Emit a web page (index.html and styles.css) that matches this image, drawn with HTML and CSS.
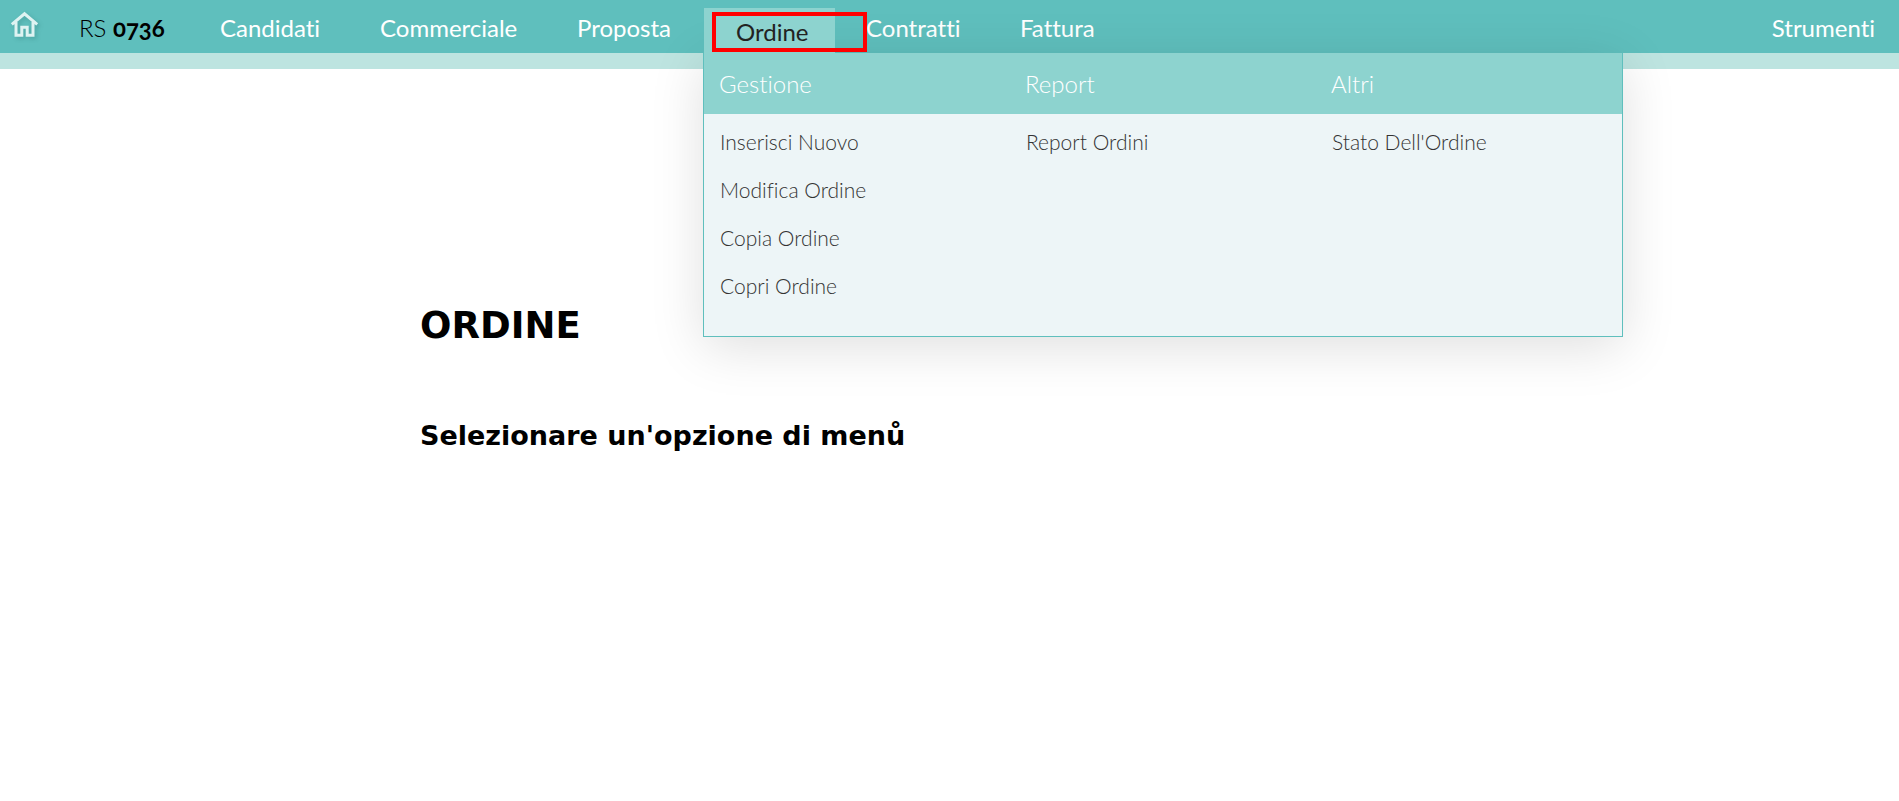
FILE: index.html
```html
<!DOCTYPE html>
<html lang="it">
<head>
<meta charset="utf-8">
<title>Ordine</title>
<meta name="viewport" content="width=device-width, initial-scale=1">
<link rel="stylesheet" href="styles.css">
</head>
<body>
<header class="topbar">
  <nav class="nav" aria-label="Principale">
    <a class="home" href="#" aria-label="Home">
      <svg width="32" height="30" viewBox="0 0 32 30" aria-hidden="true">
        <path d="M1.800 14.300 14.500 3.800 27.200 14.300M6 12V25.300H11.800V17.300H17.200V25.300H23V12" fill="none" stroke="#def3f2" stroke-width="3"/>
      </svg>
    </a>
    <a class="link company" href="#">RS <b>0736</b></a>
    <a class="link" href="#">Candidati</a>
    <a class="link" href="#">Commerciale</a>
    <a class="link" href="#">Proposta</a>
    <div class="current">
      <div class="panel">
        <section class="column">
          <h2 class="title">Gestione</h2>
          <ul class="list">
            <li><a class="option" href="#">Inserisci Nuovo</a></li>
            <li><a class="option" href="#">Modifica Ordine</a></li>
            <li><a class="option" href="#">Copia Ordine</a></li>
            <li><a class="option" href="#">Copri Ordine</a></li>
          </ul>
        </section>
        <section class="column">
          <h2 class="title">Report</h2>
          <ul class="list">
            <li><a class="option" href="#">Report Ordini</a></li>
          </ul>
        </section>
        <section class="column">
          <h2 class="title">Altri</h2>
          <ul class="list">
            <li><a class="option" href="#">Stato Dell'Ordine</a></li>
          </ul>
        </section>
      </div>
      <a class="tab" href="#">Ordine</a>
      <span class="marker"></span>
    </div>
    <a class="link" href="#">Contratti</a>
    <a class="link" href="#">Fattura</a>
    <a class="link tools" href="#">Strumenti</a>
  </nav>
</header>
<main class="content">
  <h1 class="heading">ORDINE</h1>
  <p class="hint">Selezionare un'opzione di menů</p>
</main>
</body>
</html>
```
FILE: styles.css
```css
* { box-sizing: border-box; }

body {
  margin: 0;
  background: #fff;
  color: #000;
  font-family: Lato, "Liberation Sans", sans-serif;
  font-variant-ligatures: none;
  font-variant-numeric: oldstyle-nums;
}

a { text-decoration: none; }

.topbar {
  background: #5fbfbd;
  border-bottom: 16px solid #bde4e0;
}

.nav {
  display: grid;
  grid-template-columns: 79px 141px 160px 197px 127px 162px 154px 1fr auto;
  height: 53px;
  padding-right: 24px;
}

.home { padding: 10px 0 0 10px; }
.home svg { display: block; filter: drop-shadow(2px 2px 2px rgba(0, 60, 60, 0.2)); }

.link {
  color: #fff;
  font-size: 24px;
  line-height: 56px;
  white-space: nowrap;
}

.company { color: #000; font-weight: 300; }
.company b { font-weight: 700; }

.current { position: relative; padding-top: 8px; }

.tab {
  position: relative;
  display: block;
  width: 131px;
  height: 45px;
  padding-left: 32px;
  background: #8dd3cf;
  color: #222;
  font-size: 24px;
  line-height: 48px;
}

.marker {
  position: absolute;
  top: 12px;
  left: 8px;
  width: 155px;
  height: 40px;
  border: 4px solid #f00;
  pointer-events: none;
}

.panel {
  position: absolute;
  top: 53px;
  left: -1px;
  display: grid;
  grid-template-columns: repeat(3, 1fr);
  width: 920px;
  border: 1px solid #5fbfbd;
  border-top: 0;
  background: #edf5f7;
  box-shadow: 0 10px 50px rgba(0, 0, 0, 0.13);
}

.title {
  margin: 0;
  padding-left: 15px;
  background: #8dd3cf;
  color: #fff;
  font-size: 24px;
  font-weight: 300;
  line-height: 61px;
}

.list {
  margin: 0;
  padding: 4px 0 26px 16px;
  list-style: none;
}

.option {
  display: block;
  color: #333;
  font-size: 21px;
  font-weight: 300;
  line-height: 48px;
}

.content {
  padding: 235px 0 0 420px;
  font-family: Verdana, "DejaVu Sans", sans-serif;
}

.heading {
  margin: 0;
  font-size: 37px;
  line-height: 44px;
}

.hint {
  margin: 70px 0 0;
  font-size: 27px;
  font-weight: 700;
  line-height: 36px;
}
```
